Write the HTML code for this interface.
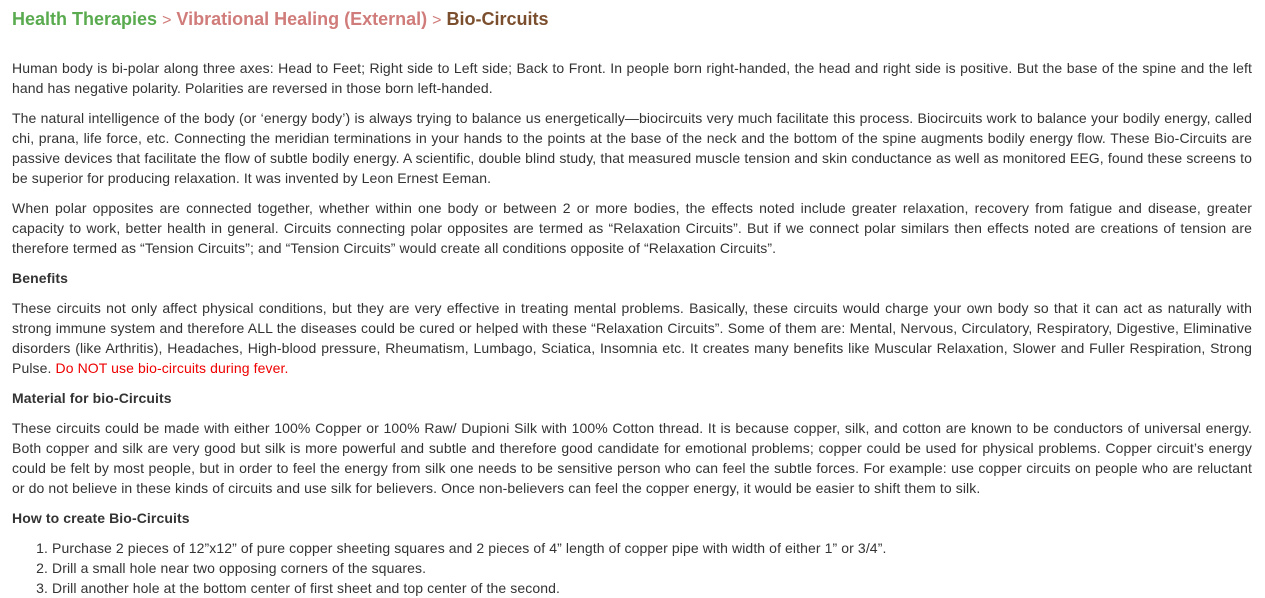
<!DOCTYPE html>
<html><head><meta charset="utf-8"><style>
body{margin:0;background:#fff;font-family:"Liberation Sans",Arial,sans-serif;color:#333;}
.wrap{position:absolute;left:12px;top:0;width:1240px;}
h1{margin:7px 0 0;font-size:18px;line-height:24px;font-weight:bold;letter-spacing:0;}
.g{color:#5aab4f}.p{color:#d07c7a}.b{color:#7b4f2e}
.sep{font-weight:normal;font-size:16px}
p{margin:0 0 10px;font-size:14px;line-height:20px;text-align:justify;letter-spacing:0.1px;}
.first{margin-top:25px}
.h{font-weight:bold}
.red{color:#e00}
ol{margin:0;padding-left:40px;font-size:14px;line-height:20px;letter-spacing:0.1px;}
</style></head><body><div class="wrap">
<h1><span class="g">Health Therapies</span> <span class="p sep">&gt;</span> <span class="p">Vibrational Healing (External)</span> <span class="p sep">&gt;</span> <span class="b">Bio-Circuits</span></h1>
<p class="first">Human body is bi-polar along three axes: Head to Feet; Right side to Left side; Back to Front. In people born right-handed, the head and right side is positive. But the base of the spine and the left hand has negative polarity. Polarities are reversed in those born left-handed.</p>
<p>The natural intelligence of the body (or ‘energy body’) is always trying to balance us energetically—biocircuits very much facilitate this process. Biocircuits work to balance your bodily energy, called chi, prana, life force, etc. Connecting the meridian terminations in your hands to the points at the base of the neck and the bottom of the spine augments bodily energy flow. These Bio-Circuits are passive devices that facilitate the flow of subtle bodily energy. A scientific, double blind study, that measured muscle tension and skin conductance as well as monitored EEG, found these screens to be superior for producing relaxation. It was invented by Leon Ernest Eeman.</p>
<p>When polar opposites are connected together, whether within one body or between 2 or more bodies, the effects noted include greater relaxation, recovery from fatigue and disease, greater capacity to work, better health in general. Circuits connecting polar opposites are termed as “Relaxation Circuits”. But if we connect polar similars then effects noted are creations of tension are therefore termed as “Tension Circuits”; and “Tension Circuits” would create all conditions opposite of “Relaxation Circuits”.</p>
<p class="h">Benefits</p>
<p>These circuits not only affect physical conditions, but they are very effective in treating mental problems. Basically, these circuits would charge your own body so that it can act as naturally with strong immune system and therefore ALL the diseases could be cured or helped with these “Relaxation Circuits”. Some of them are: Mental, Nervous, Circulatory, Respiratory, Digestive, Eliminative disorders (like Arthritis), Headaches, High-blood pressure, Rheumatism, Lumbago, Sciatica, Insomnia etc. It creates many benefits like Muscular Relaxation, Slower and Fuller Respiration, Strong Pulse. <span class="red">Do NOT use bio-circuits during fever.</span></p>
<p class="h">Material for bio-Circuits</p>
<p>These circuits could be made with either 100% Copper or 100% Raw/ Dupioni Silk with 100% Cotton thread. It is because copper, silk, and cotton are known to be conductors of universal energy. Both copper and silk are very good but silk is more powerful and subtle and therefore good candidate for emotional problems; copper could be used for physical problems. Copper circuit’s energy could be felt by most people, but in order to feel the energy from silk one needs to be sensitive person who can feel the subtle forces. For example: use copper circuits on people who are reluctant or do not believe in these kinds of circuits and use silk for believers. Once non-believers can feel the copper energy, it would be easier to shift them to silk.</p>
<p class="h">How to create Bio-Circuits</p>
<ol>
<li>Purchase 2 pieces of 12”x12” of pure copper sheeting squares and 2 pieces of 4” length of copper pipe with width of either 1” or 3/4”.</li>
<li>Drill a small hole near two opposing corners of the squares.</li>
<li>Drill another hole at the bottom center of first sheet and top center of the second.</li>
</ol>
</div></body></html>
